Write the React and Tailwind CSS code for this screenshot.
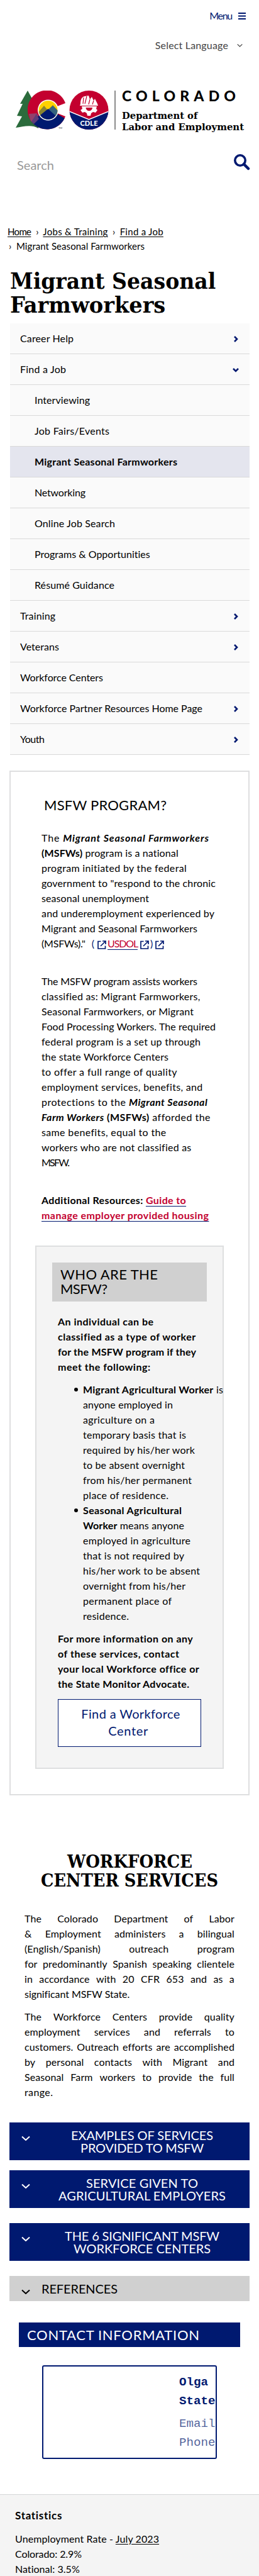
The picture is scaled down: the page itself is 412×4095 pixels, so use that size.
import React, { useLayoutEffect, useRef, useState } from "react";

/* A single line of text whose tracking is computed so that it fills `w` pixels. */
function Fit({ w, className = "", children }) {
  const ref = useRef(null);
  const [gap, setGap] = useState(0);
  useLayoutEffect(() => {
    const el = ref.current;
    const n = el.textContent.length;
    setGap((w - el.getBoundingClientRect().width) / Math.max(1, n - 1));
  }, [w]);
  return (
    <span ref={ref} className={`inline-block whitespace-nowrap ${className}`} style={{ letterSpacing: gap }}>
      {children}
    </span>
  );
}

/* A stack of 24px text lines. */
function Lines({ rows, className = "" }) {
  return (
    <div className={className}>
      {rows.map(([w, text], i) => (
        <div key={i} className="h-6 whitespace-nowrap leading-6">
          <Fit w={w}>{text}</Fit>
        </div>
      ))}
    </div>
  );
}

/* Slab-serif line, condensed to `w` pixels. */
function Slab({ w, className = "", children }) {
  const ref = useRef(null);
  const [k, setK] = useState(1);
  useLayoutEffect(() => {
    setK(w / ref.current.offsetWidth);
  }, [w]);
  return (
    <span
      ref={ref}
      className={`inline-block origin-left whitespace-nowrap font-['DejaVu_Serif_Condensed','DejaVu_Serif',serif] font-bold ${className}`}
      style={{ transform: `scaleX(${k})` }}
    >
      {children}
    </span>
  );
}

const Chevron = ({ className, d = "M1 1.5 L7 7 L13 1.5", box = "0 0 14 8", sw = 2 }) => (
  <svg viewBox={box} className={className} fill="none" stroke="currentColor" strokeWidth={sw}>
    <path d={d} />
  </svg>
);

const External = ({ className = "" }) => (
  <svg viewBox="0 0 14 14" className={`h-3.5 w-3.5 ${className}`} fill="none" stroke="#001970" strokeWidth="1.7">
    <path d="M5.5 1.5H1V13H12.5V8.5" />
    <path d="M8 1H13V6M13 1L5 9" />
  </svg>
);

const nav = [
  [85, "Career Help", 0, "right"],
  [73, "Find a Job", 0, "down"],
  [88, "Interviewing", 1],
  [119, "Job Fairs/Events", 1],
  [227, "Migrant Seasonal Farmworkers", 1, null, true],
  [81, "Networking", 1],
  [128, "Online Job Search", 1],
  [184, "Programs & Opportunities", 1],
  [127, "Résumé Guidance", 1],
  [56, "Training", 0, "right"],
  [62, "Veterans", 0, "right"],
  [132, "Workforce Centers", 0],
  [290, "Workforce Partner Resources Home Page", 0, "right"],
  [39, "Youth", 0, "right"],
];

function Logo() {
  return (
    <div className="flex h-16 pl-6">
      <svg viewBox="0 0 150 64" className="h-16 w-[150px] shrink-0">
        <defs>
          <clipPath id="seal">
            <circle cx="117.500" cy="31" r="31" />
          </clipPath>
          <clipPath id="sun">
            <circle cx="52.500" cy="31" r="15" />
          </clipPath>
          <clipPath id="ring">
            <path d="M80 20 A31 31 0 1 0 80 41 L67 36 L67 25 Z" />
          </clipPath>
        </defs>
        <path d="M20 0 L31 20 L29 19 L36 36 L37 60 C25 53 12 58 1 59 L11 41 L3 40 L12 21 L8 21 Z" fill="#2b6b3c" />
        <g clipPath="url(#ring)">
          <rect x="20" width="62" height="64" fill="#c3002f" />
          <path d="M21 54 L52 28 L82 46 V64 H21 Z" fill="#001970" />
          <path d="M22 37 L34 36 L37 40 L25 51 Z" fill="#93406b" />
          <path d="M25 51 L34 37 L38 45 L30 53 Z" fill="#5d3c77" />
        </g>
        <circle cx="52.500" cy="31" r="16.500" fill="#fff" />
        <g clipPath="url(#sun)">
          <rect x="36" y="14" width="34" height="34" fill="#ffd100" />
          <path d="M34 38 L46 24 L52 31 L60 23 L72 36 V48 H34 Z" fill="#8a8530" />
          <path d="M52 31 L60 24 L70 34 V48 H48 Z" fill="#35647e" />
          <path d="M34 44 L52.500 29 L70 45 V50 H34 Z" fill="#001970" />
        </g>
        <g clipPath="url(#seal)">
          <rect x="86" width="64" height="64" fill="#c3002f" />
          <path d="M86 33 L117.500 46 L149 33 V64 H86 Z" fill="#001970" />
          <path d="M86 33 L117.500 46 L149 33" fill="none" stroke="#fff" strokeWidth="1.500" />
        </g>
        <path d="M104 21 C104 14 106 10 111 9 L117 8 L119 14 L122 10 L125 16 L127 13 L131 21 L132 24 H103 Z" fill="#fff" />
        <path
          d="M106 25 H130 L129 29 L131 31 L128 35 L124 34 L121 36 L120 40 H115 L114 36 L111 34 L107 35 L104 31 L107 29 Z"
          fill="#fff"
        />
        <path d="M109 11 L108 21 M114 9 L111 21 M119 14 L117 22 M125 16 L123 22" stroke="#c3002f" strokeWidth="1.200" />
        <path d="M112.500 27 H123 A5 5 0 0 1 112.500 27 Z" fill="#c3002f" />
        <text x="103.500" y="55.500" fill="#fff" fontFamily="Lato" fontWeight="900" fontSize="11" textLength="28">CDLE</text>
        <text x="69" y="61" fill="#333" fontFamily="Lato" fontSize="4">TM</text>
      </svg>
      <div className="ml-2 h-[62px] w-0.5 shrink-0 bg-[#8c8c8c]" />
      <div className="ml-2.5 flex-1 whitespace-nowrap">
        <div className="h-7 leading-[17px]">
          <Fit w={181} className="text-[23px] font-black text-black">COLORADO</Fit>
        </div>
        <div className="h-[18px] leading-[22px]">
          <Slab w={120} className="text-[15px]">Department of</Slab>
        </div>
        <div className="h-[18px] leading-[22px]">
          <Slab w={194} className="text-[15px]">Labor and Employment</Slab>
        </div>
      </div>
    </div>
  );
}

function Nav() {
  return (
    <nav className="mx-[15px] mt-3 pl-px">
      {nav.map(([w, text, level, arrow, on]) => (
        <div
          key={text}
          className={`flex h-[49px] items-center justify-between border-b border-[#d9d9d9] pr-[18px] ${
            on ? "bg-[#e4e5ee] font-bold" : "bg-[#fafafa]"
          } ${level ? "pl-[39px]" : "pl-4"}`}
        >
          <Fit w={w}>{text}</Fit>
          {arrow === "right" && (
            <Chevron className="mt-0.5 h-[10px] w-2 text-[#001970]" box="0 0 8 10" d="M2 1 L6 5 L2 9" sw={2.6} />
          )}
          {arrow === "down" && (
            <Chevron className="mt-0.5 -mr-px h-2 w-[10px] text-[#001970]" box="0 0 10 8" d="M1 2 L5 6 L9 2" sw={2.6} />
          )}
        </div>
      ))}
    </nav>
  );
}

const Red = ({ children }) => (
  <a className="text-[#c3002f] underline decoration-[#001970] decoration-1 underline-offset-[3px]">{children}</a>
);

function Program() {
  return (
    <section className="mx-[15px] mt-[25px] h-[1629px] border-2 border-[#dedfe0] pl-[49px]">
      <h2 className="mt-[39px] ml-1 h-[30px] text-[22px] leading-[28px]">
        <Fit w={195}>MSFW PROGRAM?</Fit>
      </h2>
      <Lines
        className="mt-6"
        rows={[
          [266, <>The <b><i>Migrant Seasonal Farmworkers</i></b></>],
          [218, <><b>(MSFWs)</b> program is a national</>],
          [231, "program initiated by the federal"],
          [277, 'government to "respond to the chronic'],
          [171, "seasonal unemployment"],
          [275, "and underemployment experienced by"],
          [248, "Migrant and Seasonal Farmworkers"],
        ]}
      />
      <div className="flex h-6 items-center leading-6">
        <Fit w={70}>(MSFWs)."</Fit>
        <span className="ml-2.5 text-[#001970]">(</span>
        <External className="mt-[3px] ml-[5px]" />
        <span className="ml-0.5"><Fit w={49}><Red>USDOL</Red></Fit></span>
        <External className="mt-[3px] ml-1" />
        <span className="ml-[2px] text-[#001970]">)</span>
        <External className="mt-[3px] ml-1" />
      </div>
      <Lines
        className="mt-9"
        rows={[
          [248, "The MSFW program assists workers"],
          [252, "classified as: Migrant Farmworkers,"],
          [242, "Seasonal Farmworkers, or Migrant"],
          [277, "Food Processing Workers. The required"],
          [253, "federal program is a set up through"],
          [202, "the state Workforce Centers"],
          [215, "to offer a full range of quality"],
          [256, "employment services, benefits, and"],
          [264, <>protections to the <b><i>Migrant Seasonal</i></b></>],
          [268, <><b><i>Farm Workers</i> (MSFWs)</b> afforded the</>],
          [198, "same benefits, equal to the"],
          [238, "workers who are not classified as"],
          [45, "MSFW."],
        ]}
      />
      <Lines
        className="mt-9 font-bold"
        rows={[
          [230, <>Additional Resources: <Red>Guide to</Red></>],
          [266, <Red>manage employer provided housing</Red>],
        ]}
      />
      <Who />
    </section>
  );
}

function Who() {
  return (
    <div className="mt-9 -ml-[10px] h-[832px] w-[300px] border-2 border-[#dedfe0] bg-[#f4f4f4] pt-[25px] pl-[34px]">
      <h3 className="-ml-[9px] h-[62px] w-[246px] bg-[#d0d0d0] pt-[7px] pl-[13px] text-[22px] leading-[23px]">
        <Fit w={155}>WHO ARE THE</Fit>
        <br />
        <Fit w={75}>MSFW?</Fit>
      </h3>
      <Lines
        className="mt-5 font-bold"
        rows={[
          [152, "An individual can be"],
          [219, "classified as a type of worker"],
          [220, "for the MSFW program if they"],
          [147, "meet the following:"],
        ]}
      />
      <ul className="mt-3 ml-10">
        <li className="relative">
          <span className="absolute top-[9px] -left-[14px] h-[6px] w-[6px] rounded-full bg-black" />
          <Lines
            rows={[
              [223, <><b>Migrant Agricultural Worker</b> is</>],
              [143, "anyone employed in"],
              [114, "agriculture on a"],
              [164, "temporary basis that is"],
              [178, "required by his/her work"],
              [162, "to be absent overnight"],
              [173, "from his/her permanent"],
              [136, "place of residence."],
            ]}
          />
        </li>
        <li className="relative">
          <span className="absolute top-[9px] -left-[14px] h-[6px] w-[6px] rounded-full bg-black" />
          <Lines
            rows={[
              [157, <b>Seasonal Agricultural</b>],
              [161, <><b>Worker</b> means anyone</>],
              [171, "employed in agriculture"],
              [161, "that is not required by"],
              [186, "his/her work to be absent"],
              [163, "overnight from his/her"],
              [141, "permanent place of"],
              [73, "residence."],
            ]}
          />
        </li>
      </ul>
      <Lines
        className="mt-3 font-bold"
        rows={[
          [215, "For more information on any"],
          [193, "of these services, contact"],
          [224, "your local Workforce office or"],
          [209, "the State Monitor Advocate."],
        ]}
      />
      <a className="mt-3 block h-[76px] w-[228px] border border-[#001970] bg-white pt-[9px] text-center text-[20px] leading-[27px] text-[#001970]">
        <Fit w={157} className="ml-1">Find a Workforce</Fit>
        <br />
        <Fit w={63} className="mr-1">Center</Fit>
      </a>
    </div>
  );
}

function Justified({ rows, last }) {
  return (
    <div>
      {rows.map((r) => (
        <div key={r} className="flex h-6 justify-between leading-6">
          {r.split(" ").map((word, i) => (
            <span key={i}>{word}</span>
          ))}
        </div>
      ))}
      <Lines rows={[last]} />
    </div>
  );
}

function Services() {
  return (
    <section className="mt-[89px] px-[39px]">
      <h2 className="flex h-[60px] flex-col items-center text-[28px] leading-[30px]">
        <div className="h-[30px] w-[199px]"><Slab w={199}>WORKFORCE</Slab></div>
        <div className="h-[30px] w-[282px]"><Slab w={282}>CENTER SERVICES</Slab></div>
      </h2>
      <div className="mt-[35px] flex flex-col gap-3 tracking-[0.1px]">
        <Justified
          rows={[
            "The Colorado Department of Labor",
            "& Employment administers a bilingual",
            "(English/Spanish) outreach program",
            "for predominantly Spanish speaking clientele",
            "in accordance with 20 CFR 653 and as a",
          ]}
          last={[167, "significant MSFW State."]}
        />
        <Justified
          rows={[
            "The Workforce Centers provide quality",
            "employment services and referrals to",
            "customers. Outreach efforts are accomplished",
            "by personal contacts with Migrant and",
            "Seasonal Farm workers to provide the full",
          ]}
          last={[45, "range."]}
        />
      </div>
    </section>
  );
}

const bars = [
  [[226, "EXAMPLES OF SERVICES"], [196, "PROVIDED TO MSFW"], "mt-[36px]"],
  [[178, "SERVICE GIVEN TO"], [266, "AGRICULTURAL EMPLOYERS"], "mt-4"],
  [[246, "THE 6 SIGNIFICANT MSFW"], [218, "WORKFORCE CENTERS"], "mt-6"],
];

function Accordions() {
  return (
    <section className="mx-[15px]">
      {bars.map(([a, b, mt]) => (
        <div key={a[1]} className={`flex h-[60px] bg-[#001970] text-white ${mt}`}>
          <Chevron className="mt-[21px] ml-[19px] h-2 w-3.5" />
          <div className="ml-[33px] flex w-[290px] flex-col items-center pt-2.5 text-[20px] leading-[20px]">
            <Fit w={a[0]}>{a[1]}</Fit>
            <Fit w={b[0]}>{b[1]}</Fit>
          </div>
        </div>
      ))}
      <div className="mt-6 flex h-10 bg-[#d0d0d0]">
        <Chevron className="mt-[21px] ml-[19px] h-2 w-3.5" />
        <span className="ml-[18px] pt-2.5 text-[20px] leading-[20px]"><Fit w={121}>REFERENCES</Fit></span>
      </div>
      <h2 className="mx-[15px] mt-[34px] h-[39px] bg-[#001970] pl-[13px] text-[22px] leading-[39px] text-white">
        <Fit w={274}>CONTACT INFORMATION</Fit>
      </h2>
      <div className="mt-[29px] ml-[52px] h-[149px] w-[278px] overflow-hidden rounded-[3px] border-2 border-[#001970] pt-2.5 pl-[216px] font-['Liberation_Mono',monospace] text-[19.2px] leading-[30px] text-[#001970]">
        <div className="font-bold">Olga</div>
        <div className="font-bold">State</div>
        <div className="mt-1.5 text-[#001970]/70">Email</div>
        <div className="text-[#001970]/70">Phone</div>
      </div>
    </section>
  );
}

export default function App() {
  return (
    <div className="h-[4095px] w-[412px] overflow-hidden bg-white font-['Lato',sans-serif] text-base text-black">
      <div className="flex h-[50px] items-center justify-end gap-2.5 pr-[21px] text-[#001970]">
        <Fit w={37}>Menu</Fit>
        <svg viewBox="0 0 12 11" className="h-[11px] w-3" stroke="currentColor" strokeWidth="2">
          <path d="M0 1H12M0 5.500H12M0 10H12" />
        </svg>
      </div>
      <div className="flex h-[44px] items-center justify-end pr-[26px] text-[#444]">
        <Fit w={116}>Select Language</Fit>
        <Chevron className="ml-[14px] h-[6px] w-[9px]" />
      </div>
      <div className="h-[50px]" />
      <Logo />
      <div className="mt-9 flex justify-between pr-[14px] pl-[27px]">
        <span className="pt-[6px] text-[20px] leading-6 text-[#999]"><Fit w={59}>Search</Fit></span>
        <svg viewBox="0 0 26 26" className="mt-px h-[26px] w-[26px]" fill="none" stroke="#001970">
          <circle cx="10" cy="10" r="8.200" strokeWidth="3.600" />
          <path d="M16 16L23 23" strokeWidth="4.500" strokeLinecap="round" />
        </svg>
      </div>
      <div className="mt-[83px] h-[47px] pl-3 text-[15px] leading-[23px]">
        <div className="flex h-[23px]">
          <Fit w={38} className="underline underline-offset-2">Home</Fit>
          <span className="w-[19px] pl-[1px] text-center">›</span>
          <Fit w={103} className="underline underline-offset-2">Jobs & Training</Fit>
          <span className="w-[19px] text-center">›</span>
          <Fit w={69} className="underline underline-offset-2">Find a Job</Fit>
        </div>
        <div className="flex">
          <span className="w-[14px] pl-[2px]">›</span>
          <Fit w={204}>Migrant Seasonal Farmworkers</Fit>
        </div>
      </div>
      <h1 className="mt-[22px] pl-4 text-[36px] leading-[38px]">
        <div className="h-[38px]"><Slab w={327}>Migrant Seasonal</Slab></div>
        <div className="h-[38px]"><Slab w={247}>Farmworkers</Slab></div>
      </h1>
      <Nav />
      <Program />
      <Services />
      <Accordions />
      <footer className="mt-14 h-[131px] border-t border-[#d4d6d8] bg-[#f4f4f4] pt-[21px] pl-6">
        <h4 className="mb-[13px] h-6 text-[17px] leading-6 font-bold"><Fit w={75}>Statistics</Fit></h4>
        <Lines
          rows={[
            [229, <>Unemployment Rate - <span className="underline underline-offset-2">July 2023</span></>],
            [106, "Colorado: 2.9%"],
            [103, "National: 3.5%"],
          ]}
        />
      </footer>
    </div>
  );
}
